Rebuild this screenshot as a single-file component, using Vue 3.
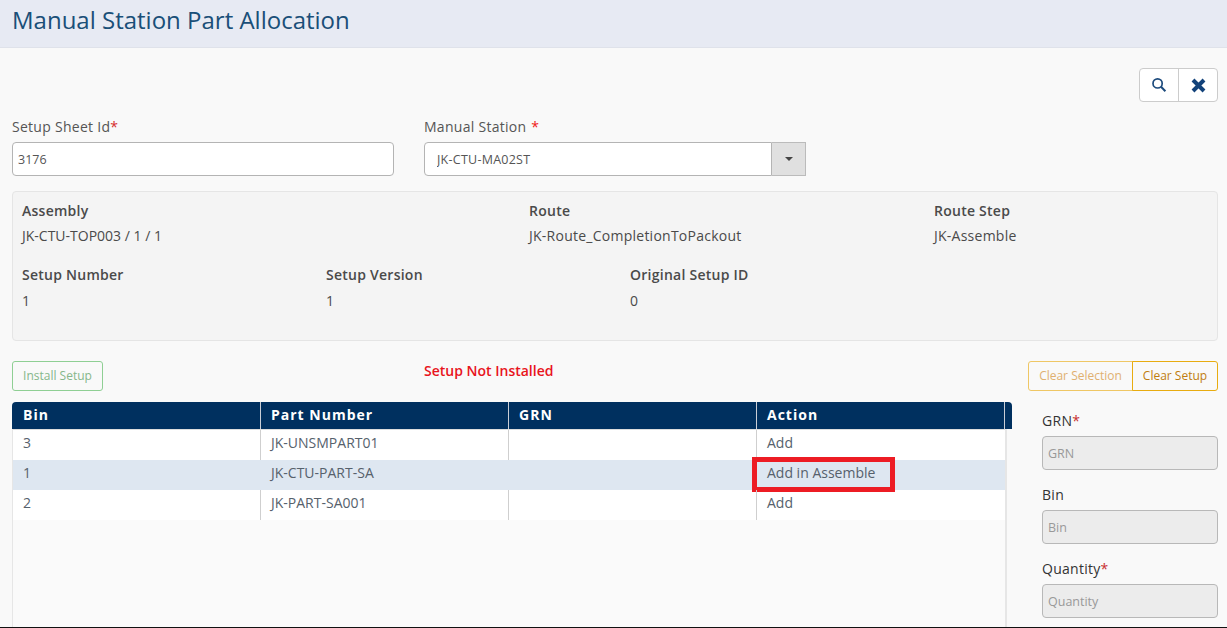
<script setup>
const rows = [
  { bin: '3', part: 'JK-UNSMPART01', action: 'Add' },
  { bin: '1', part: 'JK-CTU-PART-SA', action: 'Add in Assemble', selected: true },
  { bin: '2', part: 'JK-PART-SA001', action: 'Add' }
]
const topInfo = [
  { label: 'Assembly', value: 'JK-CTU-TOP003 / 1 / 1', cls: 'w-a' },
  { label: 'Route', value: 'JK-Route_CompletionToPackout', cls: 'w-b' },
  { label: 'Route Step', value: 'JK-Assemble', cls: '' }
]
const bottomInfo = [
  { label: 'Setup Number', value: '1' },
  { label: 'Setup Version', value: '1' },
  { label: 'Original Setup ID', value: '0' }
]
const sideFields = [
  { label: 'GRN', req: true },
  { label: 'Bin', req: false },
  { label: 'Quantity', req: true }
]
</script>

<template>
  <div class="page">
    <header class="head"><h1>Manual Station Part Allocation</h1></header>
    <main class="content">
      <div class="toolbar">
        <div class="tool-group">
          <button class="tool">
            <svg width="16" height="16" viewBox="0 0 16 16" fill="none" stroke="#1c4a7c" stroke-width="1.7">
              <circle cx="6.6" cy="6.4" r="4.6" />
              <path d="M10 9.8 14.4 14.2" stroke-width="2" />
            </svg>
          </button>
          <button class="tool">
            <svg width="15" height="15" viewBox="0 0 15 15" fill="none" stroke="#12427a" stroke-width="4">
              <path d="M2 2 13 13M13 2 2 13" />
            </svg>
          </button>
        </div>
      </div>

      <div class="form-row">
        <div class="field">
          <label>Setup Sheet Id<span class="req">*</span></label>
          <input class="text" value="3176" />
        </div>
        <div class="field">
          <label>Manual Station <span class="req bright">*</span></label>
          <div class="combo">
            <input class="text combo-input" value="JK-CTU-MA02ST" />
            <span class="combo-btn"><i class="caret"></i></span>
          </div>
        </div>
      </div>

      <section class="info">
        <div class="info-row top">
          <div v-for="i in topInfo" :key="i.label" class="info-item" :class="i.cls">
            <strong>{{ i.label }}</strong>
            <span>{{ i.value }}</span>
          </div>
        </div>
        <div class="info-row bottom">
          <div v-for="i in bottomInfo" :key="i.label" class="info-item w-c">
            <strong>{{ i.label }}</strong>
            <span>{{ i.value }}</span>
          </div>
        </div>
      </section>

      <div class="actions">
        <button class="btn-install"><span class="btn-label">Install Setup</span></button>
        <div class="status">Setup Not Installed</div>
        <div class="clear-group">
          <button class="btn-clear faded"><span class="btn-label">Clear Selection</span></button>
          <button class="btn-clear"><span class="btn-label">Clear Setup</span></button>
        </div>
      </div>

      <div class="lower">
        <div class="grid">
          <div class="grid-head">
            <div class="th">Bin</div>
            <div class="th">Part Number</div>
            <div class="th">GRN</div>
            <div class="th">Action</div>
            <div class="th-spacer"></div>
          </div>
          <div class="grid-body">
            <div v-for="r in rows" :key="r.bin" class="tr" :class="{ selected: r.selected }">
              <div class="td">{{ r.bin }}</div>
              <div class="td">{{ r.part }}</div>
              <div class="td"></div>
              <div class="td">
                {{ r.action }}
                <span v-if="r.selected" class="highlight"></span>
              </div>
            </div>
          </div>
        </div>
        <aside class="side">
          <div v-for="f in sideFields" :key="f.label" class="side-field">
            <label>{{ f.label }}<span v-if="f.req" class="req dark">*</span></label>
            <input class="text disabled" :placeholder="f.label" disabled />
          </div>
        </aside>
      </div>
    </main>
  </div>
</template>

<style>
html, body { margin: 0; overflow: hidden; }
</style>

<style scoped>
* { box-sizing: border-box; }
.page {
  width: 1227px;
  height: 628px;
  overflow: hidden;
  background: #f9f9f9;
  border-bottom: 1px solid #111;
  font-family: "Open Sans", sans-serif;
  font-size: 14px;
  color: #4a4a4a;
  display: flex;
  flex-direction: column;
}
.head {
  height: 48px;
  flex: none;
  background: #e7eaf3;
  border-bottom: 1px solid #dfe2ea;
  padding: 0 12px;
}
.head h1 {
  margin: 0;
  font-size: 24px;
  font-weight: 400;
  line-height: 40px;
  color: #1a4f78;
}
.content { padding: 20px 9px 0 12px; flex: 1; min-height: 0; }
.toolbar { display: flex; justify-content: flex-end; height: 34px; }
.tool-group {
  display: flex;
  width: 79px;
  height: 34px;
  background: #fff;
  border: 1px solid #ccc;
  border-radius: 4px;
}
.tool {
  flex: 1;
  border: 0;
  background: none;
  padding: 0;
  display: flex;
  align-items: center;
  justify-content: center;
}
.tool + .tool { border-left: 1px solid #ccc; }
.form-row { display: flex; gap: 30px; margin-top: 14px; }
.field { width: 382px; }
.field label, .side-field label {
  display: block;
  line-height: 22px;
  height: 26px;
  color: #555;
  letter-spacing: 0.28px;
}
.req { color: #d62c2c; }
.req.bright { color: #f01818; margin-left: 1px; }
.req.dark { color: #c8302f; }
.text {
  display: block;
  width: 100%;
  height: 34px;
  border: 1px solid #b4b4b4;
  border-radius: 4px;
  background: #fff;
  padding: 0 5px;
  font: inherit;
  font-size: 12.5px;
  color: #555;
  outline: none;
}
.combo { display: flex; }
.combo-input {
  flex: 1;
  border-radius: 4px 0 0 4px;
  padding-left: 12px;
  letter-spacing: 0.25px;
}
.combo-btn {
  width: 34px;
  height: 34px;
  background: #e0e0e0;
  border: 1px solid #bbb;
  border-left: 0;
  display: flex;
  align-items: center;
  justify-content: center;
}
.caret {
  border: 4px solid transparent;
  border-top-color: #444;
  border-bottom: 0;
}
.info {
  margin-top: 15px;
  height: 150px;
  background: #f4f4f4;
  border: 1px solid #e5e5e5;
  border-radius: 4px;
  padding: 9px 9px;
}
.info-row { display: flex; }
.info-row.bottom { margin-top: 19px; }
.info-row.bottom .info-item { gap: 6px; }
.info-item { display: flex; flex-direction: column; gap: 5px; line-height: 20px; }
.info-item strong { font-weight: 600; color: #4a4a4a; letter-spacing: 0.25px; }
.info-item span { color: #4a4a4a; }
.top .info-item + .info-item span { letter-spacing: 0.25px; }
.w-a { width: 507px; }
.w-b { width: 405px; }
.w-c { width: 304px; }
.actions {
  display: flex;
  align-items: flex-start;
  margin-top: 20px;
  height: 30px;
}
.btn-install {
  width: 91px;
  height: 30px;
  background: none;
  border: 1px solid #8fcf94;
  border-radius: 3px;
  color: #86b78b;
  font: inherit;
  font-size: 12px;
  padding: 0;
}
.btn-label { display: block; line-height: 28px; height: 28px; }
.status {
  margin-left: 321px;
  color: #e8141c;
  font-weight: 600;
  line-height: 20px;
}
.clear-group { margin-left: auto; display: flex; }
.btn-clear {
  height: 30px;
  background: none;
  border: 1px solid #e8ac10;
  border-radius: 0 3px 3px 0;
  color: #c07d10;
  font: inherit;
  font-size: 12px;
  padding: 0;
  width: 86px;
  margin-left: -1px;
}
.btn-clear.faded {
  width: 105px;
  margin-left: 0;
  border-color: #efc765;
  border-radius: 3px 0 0 3px;
  color: #e0b070;
}
.lower { display: flex; margin-top: 11px; }
.grid { width: 1000px; flex: none; }
.grid-head {
  display: flex;
  height: 27px;
  background: #00305f;
  border-radius: 4px 4px 0 0;
  color: #fff;
  font-weight: 700;
  letter-spacing: 1px;
}
.th {
  width: 248px;
  padding-left: 10px;
  line-height: 26px;
  border-right: 1px solid #c9ced6;
}
.th:first-child { width: 249px; padding-left: 11px; }
.th-spacer { flex: 1; }
.grid-body {
  width: 995px;
  height: 300px;
  background: #fafafa;
  border-right: 2px solid #e6e6e6;
  border-left: 1px solid #e6e6e6;
}
.tr { display: flex; height: 30px; background: #fff; color: #56616c; line-height: 26px; }
.tr:first-child { height: 31px; border-top: 1px solid #ddd; }
.tr.selected { background: #dee7f1; }
.td {
  position: relative;
  padding-left: 10px;
  border-right: 1px solid #cfcfcf;
  width: 248px;
}
.td:last-child { border-right: 0; }
.tr.selected .td { border-right-color: transparent; }
.highlight {
  position: absolute;
  left: -5px;
  top: -3px;
  width: 143px;
  height: 35px;
  border: 5px solid #ed1c24;
}
.side { width: 176px; margin-left: 30px; padding-top: 8px; }
.side-field { margin-bottom: 14px; }
.side-field label { color: #333; }
.disabled { background: #ececec; border-color: #b8b8b8; }
.disabled::placeholder { color: #999; opacity: 1; }
</style>
